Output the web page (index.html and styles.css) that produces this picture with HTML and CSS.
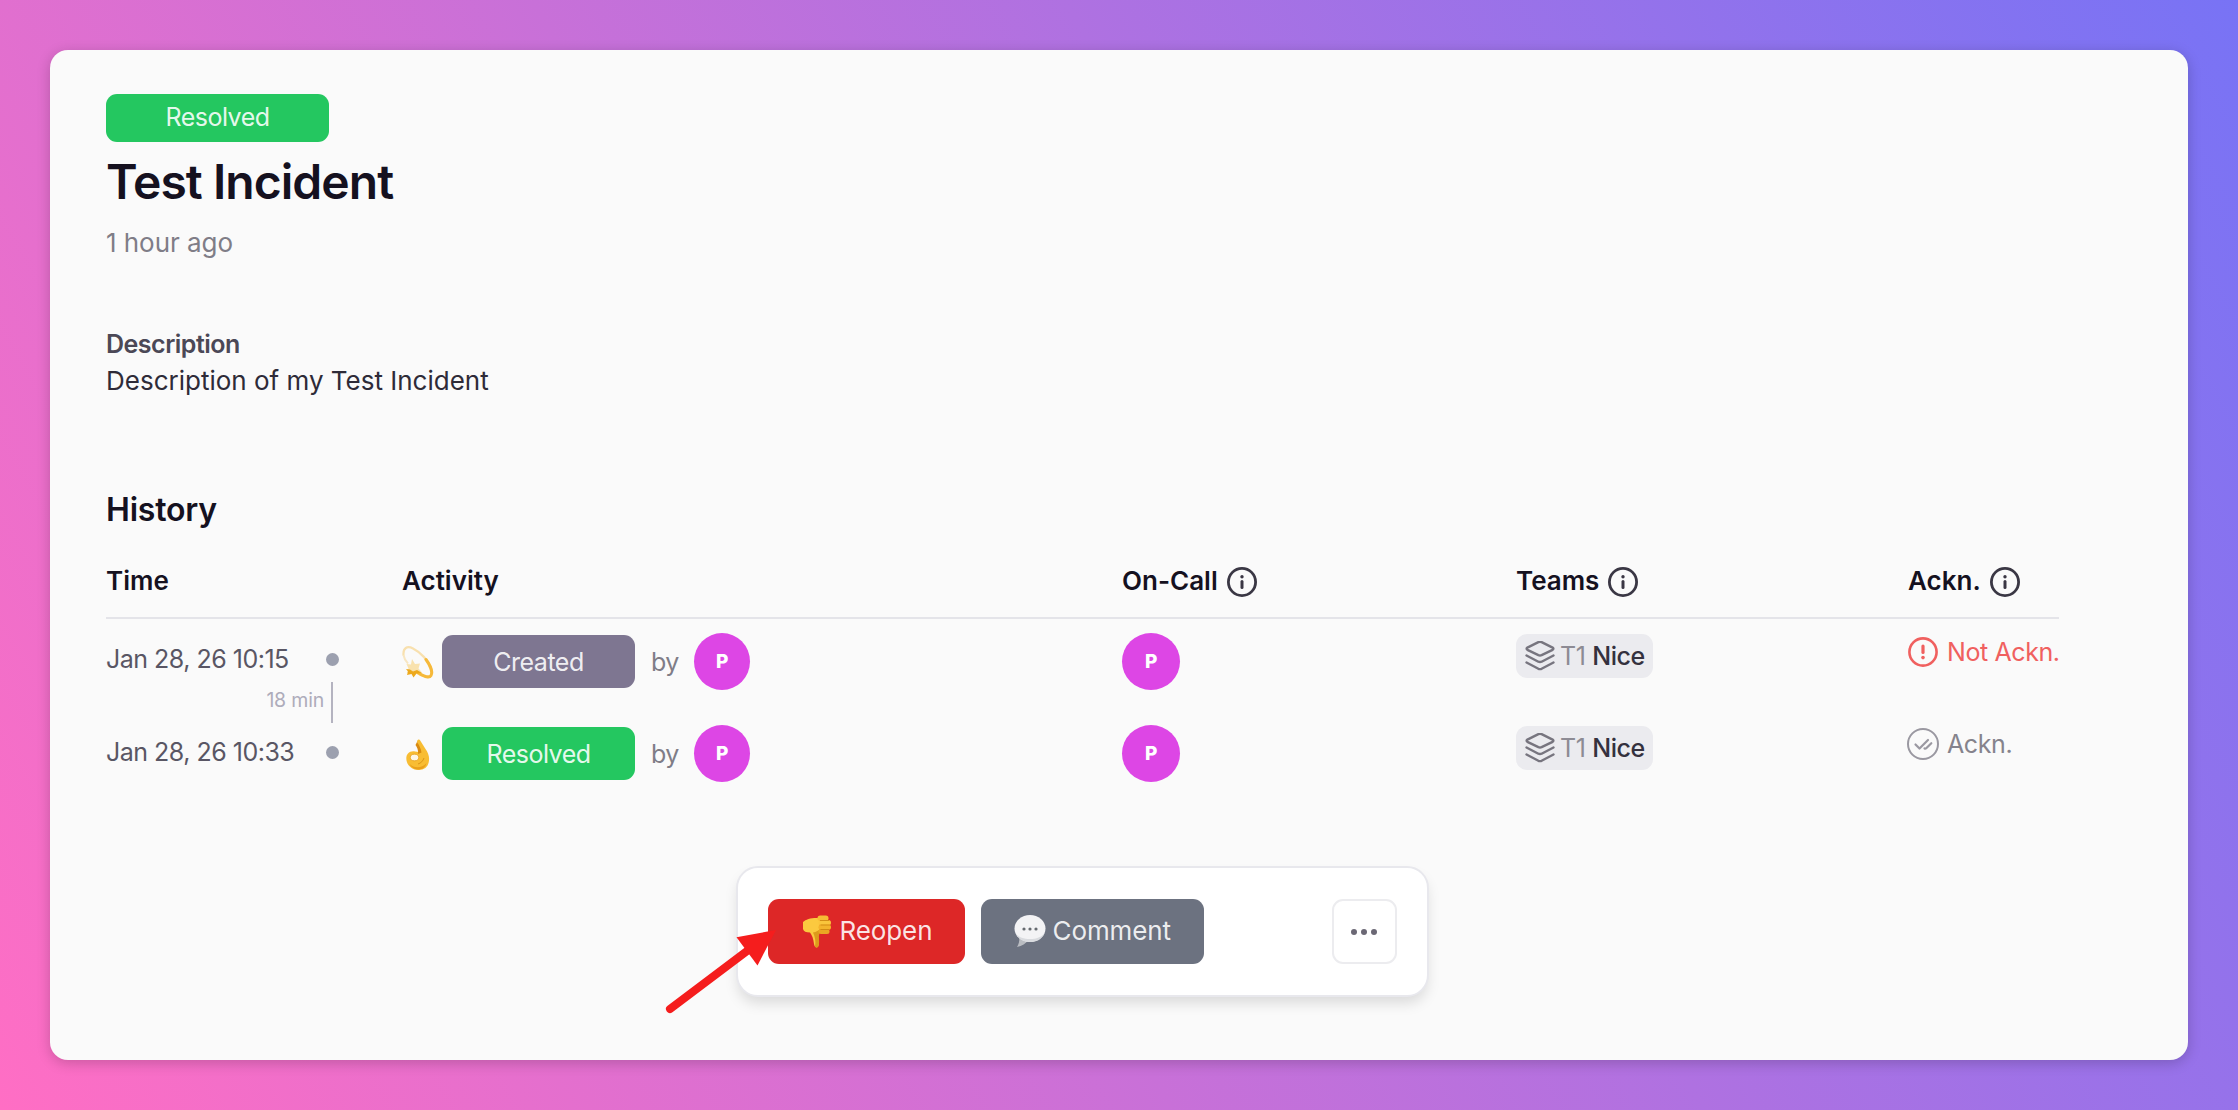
FILE: index.html
```html
<!DOCTYPE html>
<html lang="en">
<head>
    <meta charset="UTF-8">
    <meta name="viewport" content="width=device-width, initial-scale=1.0">
    <title>Test Incident</title>
    <link rel="stylesheet" href="styles.css">
</head>
<body>
    <!-- Shared icons -->
    <svg class="sprite" width="0" height="0">
        <symbol id="info" viewBox="0 0 30 30">
            <circle cx="15" cy="15" r="13.6" fill="none" stroke="currentColor" stroke-width="2.8"/>
            <path d="M15 14.5v6" stroke="currentColor" stroke-width="3" stroke-linecap="round"/>
            <circle cx="15" cy="9.7" r="1.7" fill="currentColor"/>
        </symbol>
        <symbol id="layers" viewBox="0 0 30 30">
            <g fill="none" stroke="currentColor" stroke-width="2.4" stroke-linejoin="round" stroke-linecap="round">
                <path d="M13.4 1.2a4 4 0 0 1 3.2 0l11 5.4q1.600 1.100 0 2.200l-11 5.400a4 4 0 0 1-3.200 0l-11-5.400q-1.600-1.100 0-2.200z"/>
                <path d="M1.500 14.500l11.900 6.200a4 4 0 0 0 3.200 0l11.900-6.200"/>
                <path d="M1.500 21.500l11.900 6.300a4 4 0 0 0 3.200 0l11.900-6.300"/>
            </g>
        </symbol>
    </svg>

    <main class="panel">
        <div class="content">
            <span class="badge badge-large resolved">Resolved</span>
            <h1>Test Incident</h1>
            <p class="ago">1 hour ago</p>

            <h3>Description</h3>
            <p class="description">Description of my Test Incident</p>

            <h2>History</h2>
            <div class="history">
                <div class="row head">
                    <div>Time</div>
                    <div>Activity</div>
                    <div class="head-cell">On-Call <svg class="icon"><use href="#info"/></svg></div>
                    <div class="head-cell">Teams <svg class="icon"><use href="#info"/></svg></div>
                    <div class="head-cell">Ackn. <svg class="icon"><use href="#info"/></svg></div>
                </div>

                <div class="row">
                    <div class="time">
                        <div class="stamp">Jan 28, 26 10:15 <span class="dot"></span></div>
                        <div class="duration">18 min</div>
                    </div>
                    <div class="activity">
                        <svg class="emoji" viewBox="0 0 32 34">
                            <path d="M1.500 10C1 3 5 .5 11 3.500S27 15 29.500 25" fill="none" stroke="#f8e0ae" stroke-width="2.200" stroke-linecap="round"/>
                            <path d="M24 14.500C28 20 31 27 29 30.500S22 31 16 28" fill="none" stroke="#f6b93a" stroke-width="3" stroke-linecap="round"/>
                            <path d="M1.500 10C2 13 3.500 16 6 18.500" fill="none" stroke="#f8e6c2" stroke-width="2"/>
                            <path d="M10 14l3 5 5-.5-1.500 5 3.500 4-5.500.500-3 3.500-2.500-4-4 .500 1.500-4.500-2-4.500 4.500.5z" fill="#f9e2ae"/>
                            <path d="M4 24l4 .5 3 2 4-1.500 5 3-5.500.500-3 4-2-3.500-4.500 1 1-3.500z" fill="#eda91c"/>
                        </svg>
                        <span class="badge created">Created</span>
                        <span class="by">by</span>
                        <span class="avatar">P</span>
                    </div>
                    <div><span class="avatar avatar-large">P</span></div>
                    <div><span class="team"><svg class="icon"><use href="#layers"/></svg><span class="tier">T1</span>Nice</span></div>
                    <div class="ackn not">
                        <svg class="icon" viewBox="0 0 30 30">
                            <circle cx="15" cy="15" r="13.6" fill="none" stroke="currentColor" stroke-width="2.600"/>
                            <path d="M15 9v6.500" stroke="currentColor" stroke-width="3.200" stroke-linecap="round"/>
                            <circle cx="15" cy="20.600" r="1.800" fill="currentColor"/>
                        </svg>
                        Not Ackn.
                    </div>
                </div>

                <div class="row">
                    <div class="time">
                        <div class="stamp">Jan 28, 26 10:33 <span class="dot"></span></div>
                    </div>
                    <div class="activity">
                        <svg class="emoji" viewBox="0 0 32 34">
                            <path d="M15 5c0-2.500 2-3.500 3.500-1l5 8c2.500 3.500 4 7 3.500 11.500-.5 6-4.500 9.500-10.500 9.500S5.500 29 4.500 23.500c-.5-3 0-5.500 1.500-7s4-2.500 7-2l4 .5z" fill="#f8bd33"/>
                            <path d="M15 5c2 3 4 6.500 4.500 10.500L16 17c.5-4-1-7-2.500-9z" fill="#d98a10"/>
                            <path d="M7.500 27c4 4 12 5 17-1-1 4.500-4.500 6.500-8 6.500S9 30.500 7.500 27z" fill="#eaa01c"/>
                            <ellipse cx="12.500" cy="20.500" rx="4.200" ry="3.300" fill="#fdf6e4" stroke="#e5a11f" stroke-width=".8"/>
                            <path d="M16 27c3-1 5-3 6-6" fill="none" stroke="#dc9616" stroke-width="1"/>
                        </svg>
                        <span class="badge resolved">Resolved</span>
                        <span class="by">by</span>
                        <span class="avatar">P</span>
                    </div>
                    <div><span class="avatar avatar-large">P</span></div>
                    <div><span class="team"><svg class="icon"><use href="#layers"/></svg><span class="tier">T1</span>Nice</span></div>
                    <div class="ackn">
                        <svg class="icon" viewBox="0 0 30 30">
                            <circle cx="15" cy="15" r="15" fill="none" stroke="currentColor" stroke-width="2"/>
                            <path d="M7.500 15.500l4 4 8.500-8.500M16.500 19.500q1 .5 2-.5l4.800-4.800" fill="none" stroke="currentColor" stroke-width="2.200" stroke-linecap="round" stroke-linejoin="round"/>
                        </svg>
                        Ackn.
                    </div>
                </div>
            </div>

            <div class="actions">
                <button class="button reopen">
                    <svg class="emoji" viewBox="0 0 32 34">
                        <path d="M2 8c3-3 9-4.500 16-4l1 13c-1.500 2-2 4-1.500 8 .5 3 .5 6-.5 8-2 1.200-3.500 0-4-3-.5-5-2-9-4-11.500C5 18.500 2.500 17.500 2 15z" fill="#fbc93f"/>
                        <path d="M12 18.500c3-.5 6-2 7-4l1 3c-2 2-2.500 4-2 8 .3 3 0 6-1 7.500-1.500.8-2.500.2-3-.5 1-5 0-10-2-14z" fill="#dd9a1c"/>
                        <rect x="16.500" y="1.500" width="11" height="5.500" rx="2.700" fill="#f6bc34"/>
                        <rect x="17.500" y="6" width="12.500" height="5.500" rx="2.700" fill="#f9c53c"/>
                        <rect x="17.500" y="10.500" width="12.500" height="5.500" rx="2.700" fill="#f3b42c"/>
                        <rect x="17.500" y="15" width="11" height="5" rx="2.500" fill="#eaa623"/>
                        <path d="M19 6.500h9M19.500 11h10M19.500 15.500h9" stroke="#cf8813" stroke-width=".9"/>
                    </svg>
                    Reopen
                </button>
                <button class="button comment">
                    <svg class="emoji" viewBox="0 0 32 34">
                        <path d="M5 23c1 4-.5 7.500-2 10 5-1 9-3.500 11-7z" fill="#b9bcc1"/>
                        <ellipse cx="16" cy="14.500" rx="15.500" ry="13.500" fill="#f3f3f5"/>
                        <path d="M1.500 19c3 7 9 9 14.500 9s12-2 14.500-9c-3 4-8 6-14.500 6S4 23 1.500 19z" fill="#d9dbdf"/>
                        <circle cx="10" cy="15" r="1.600" fill="#666a70"/>
                        <circle cx="16" cy="15" r="1.600" fill="#666a70"/>
                        <circle cx="22" cy="15" r="1.600" fill="#666a70"/>
                    </svg>
                    Comment
                </button>
                <button class="more" aria-label="More"><i></i><i></i><i></i></button>

                <svg class="arrow" viewBox="0 0 120 90">
                    <path d="M9 83L90 22" stroke="#f51d1d" stroke-width="8" stroke-linecap="round"/>
                    <path d="M75.500 11.300L115 4 96.500 39.500z" fill="#f51d1d"/>
                </svg>
            </div>
        </div>
    </main>
</body>
</html>
```

FILE: styles.css
```css
* {
    box-sizing: border-box;
}

body {
    margin: 0;
    height: 1110px;
    padding: 50px;
    background: linear-gradient(60deg, #ff6ec4, #7873f5);
    font-family: Inter, "Liberation Sans", sans-serif;
    font-size: 25px;
    letter-spacing: -0.5px;
    color: #15111f;
}

h1, h2, h3, p {
    margin: 0;
}

.sprite {
    position: absolute;
}

.panel {
    height: 1010px;
    padding: 44px 129px 0 56px;
    background: #fafafa;
    border-radius: 18px;
    box-shadow: 0 3px 14px rgba(0, 0, 0, 0.2);
}

.content {
    display: flex;
    flex-direction: column;
}

.badge {
    display: flex;
    justify-content: center;
    width: 193px;
    height: 53px;
    border-radius: 11px;
    color: rgba(255, 255, 255, 0.9);
    line-height: 54px;
}

.badge-large {
    width: 223px;
    height: 48px;
    line-height: 46px;
}

.resolved {
    background: #24c760;
}

.created {
    background: #7e7691;
}

h1 {
    margin-top: 12px;
    font-size: 48px;
    font-weight: 600;
    line-height: 56px;
    letter-spacing: -0.95px;
}

.ago {
    margin-top: 16px;
    font-size: 26px;
    line-height: 33px;
    letter-spacing: -0.05px;
    color: #7f7d87;
}

h3 {
    margin-top: 67px;
    font-size: 25px;
    font-weight: 600;
    line-height: 36px;
    color: #4b4856;
}

.description {
    font-size: 26px;
    line-height: 38px;
    letter-spacing: 0;
    color: #2e2b38;
}

h2 {
    margin-top: 90px;
    font-size: 32px;
    font-weight: 600;
    line-height: 40px;
    letter-spacing: -0.2px;
}

.row {
    display: grid;
    grid-template-columns: 296px 720px 394px 392px 151px;
    align-items: start;
    height: 92px;
    padding-top: 14px;
}

.row.head {
    align-items: center;
    height: 89px;
    padding-top: 14px;
    border-bottom: 2px solid #e4e4e9;
    font-size: 26px;
    font-weight: 600;
    letter-spacing: 0;
}

.head-cell {
    display: flex;
    align-items: center;
    gap: 9px;
}

.icon {
    flex: none;
    width: 30px;
    height: 30px;
    overflow: visible;
    color: #3a3744;
}

.head-cell .icon {
    margin-top: 2px;
}

.time {
    width: 233px;
    padding-top: 3px;
    color: #595664;
}

.stamp {
    display: flex;
    justify-content: space-between;
    align-items: center;
    height: 46px;
}

.row:last-child .stamp {
    height: 48px;
}

.dot {
    width: 13px;
    height: 13px;
    border-radius: 50%;
    background: #9ca0af;
}

.duration {
    width: 227px;
    height: 41px;
    padding-right: 7px;
    border-right: 2px solid #b4b3c0;
    font-size: 19.5px;
    line-height: 37px;
    letter-spacing: -0.2px;
    text-align: right;
    color: #aeacba;
}

.activity {
    display: flex;
    align-items: center;
}

.emoji {
    flex: none;
    width: 32px;
    height: 34px;
}

.activity .badge {
    margin-left: 8px;
}

.by {
    width: 26px;
    margin: 1px 17px 0 16px;
    color: #7f7d87;
}

.avatar {
    display: flex;
    justify-content: center;
    align-items: center;
    width: 56px;
    height: 57px;
    border-radius: 50%;
    background: #dd46e5;
    color: #fff;
    font-size: 19px;
    font-weight: 800;
}

.avatar-large {
    width: 58px;
}

.team {
    display: flex;
    align-items: center;
    width: 137px;
    height: 44px;
    margin-top: 1px;
    padding-left: 9px;
    border-radius: 11px;
    background: #ebebef;
    color: #34313e;
    font-weight: 500;
    line-height: 44px;
}

.team .icon {
    margin-right: 5px;
    color: #77757f;
}

.tier {
    margin-right: 7px;
    color: #8d8b94;
    font-weight: 400;
}

.ackn {
    display: flex;
    align-items: center;
    gap: 9px;
    height: 38px;
    color: #85838c;
    letter-spacing: -0.4px;
    white-space: nowrap;
}

.ackn .icon {
    color: #9a98a1;
}

.ackn.not,
.ackn.not .icon {
    color: #f0605f;
}

.actions {
    position: relative;
    display: flex;
    align-self: center;
    width: 693px;
    height: 131px;
    margin: 63px 1px 0 0;
    padding: 31px 30px 0 30px;
    background: #fff;
    border: 2px solid #e8e8ed;
    border-radius: 22px;
    box-shadow: 0 8px 14px -2px rgba(0, 0, 0, 0.13);
}

.button {
    display: flex;
    align-items: center;
    gap: 7px;
    height: 65px;
    margin: 0 16px 0 0;
    padding: 0 0 2px 33px;
    border: none;
    border-radius: 11px;
    color: rgba(255, 255, 255, 0.88);
    font-family: inherit;
    font-size: 26px;
    letter-spacing: -0.1px;
}

.reopen {
    width: 197px;
    background: #dd2727;
}

.comment {
    width: 223px;
    background: #6c7280;
}

.more {
    display: flex;
    justify-content: center;
    align-items: center;
    gap: 4px;
    width: 65px;
    height: 65px;
    margin-left: auto;
    padding: 0;
    background: #fff;
    border: 2px solid #ececef;
    border-radius: 11px;
}

.more i {
    width: 6px;
    height: 6px;
    border-radius: 50%;
    background: #6b6875;
}

/* Pointer lying over the edge of the reopen button */
.arrow {
    position: absolute;
    left: -77px;
    top: 58px;
    width: 120px;
    height: 90px;
}
```
